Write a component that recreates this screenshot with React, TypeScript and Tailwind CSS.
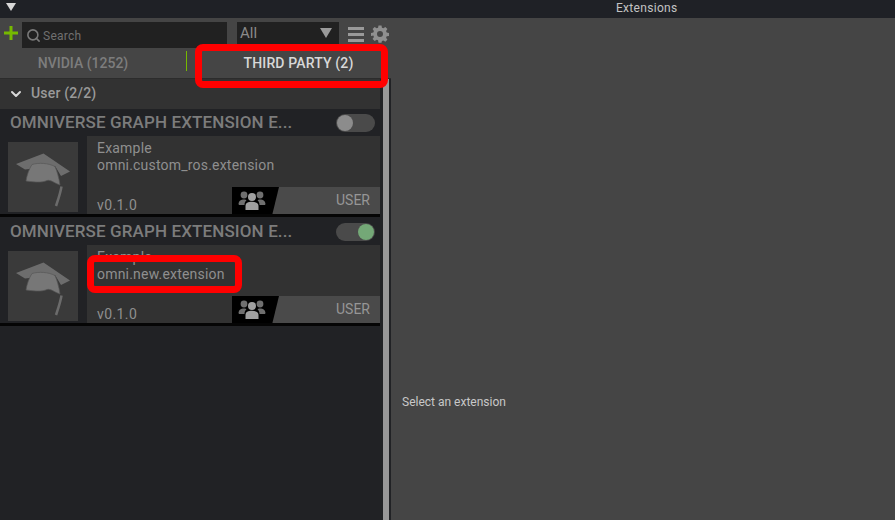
import { ChevronDown, Search } from "lucide-react";

function CapIcon() {
  return (
    <svg viewBox="0 0 70 70" className="w-[70px] h-[70px]">
      <path d="M35.500 11.500L8 22L17 27.500L47 24L53 34L62 29.500Z" fill="#6d6d6d" />
      <path d="M24 22.500C31 20.500 40 21 47 24.500C49 29 51 36 52 43C46 41 43 37.500 39 38.500C33 41 27 40 18 39C19 33 21 27 24 22.500Z" fill="#777777" stroke="#565656" strokeWidth="0.7" />
      <path d="M53.500 44.500C52.500 51 50 58 48 64" stroke="#6b6b6b" strokeWidth="2.500" fill="none" />
    </svg>
  );
}

function UsersIcon() {
  return (
    <svg viewBox="0 0 28 22" className="w-[28px] h-[22px]" fill="#8e8e8e">
      <circle cx="6" cy="6" r="3.400" fill="#6f6f6f" />
      <circle cx="22" cy="6" r="3.400" fill="#6f6f6f" />
      <path d="M0.500 15C1 11.500 3 10.500 6 10.500C7.500 10.500 8 11 8.500 11.500C7 12.500 6.500 14 6.500 16L1 16Z" fill="#6f6f6f" />
      <path d="M27.500 15C27 11.500 25 10.500 22 10.500C20.500 10.500 20 11 19.500 11.500C21 12.500 21.500 14 21.500 16L27 16Z" fill="#6f6f6f" />
      <circle cx="14" cy="8" r="4" fill="#a0a0a0" />
      <path d="M7.500 21V17C7.500 14 10 12.800 14 12.800C18 12.800 20.500 14 20.500 17V21Z" fill="#a0a0a0" />
    </svg>
  );
}

function ExtensionCard({ subtitle, enabled }: { subtitle: string; enabled: boolean }) {
  return (
    <div className="border-b-[3px] border-[#050505] w-[380px]">
      <div className="h-[27px] pl-[10px] pr-[5px] flex items-center justify-between bg-[#212225]">
        <span className="text-[17px] font-medium tracking-[0.12px] text-[#7c7c7c] whitespace-nowrap">
          OMNIVERSE GRAPH EXTENSION E...
        </span>
        <span className={`w-[39px] h-[18px] rounded-full bg-[#4a4a4a] flex items-center px-[1px] ${enabled ? "justify-end" : "justify-start"}`}>
          <span className={`w-[16px] h-[16px] rounded-full ${enabled ? "bg-[#74a877]" : "bg-[#8c8c8c]"}`} />
        </span>
      </div>
      <div className="h-[78px] flex bg-[#212225]">
        <div className="w-[87px] pl-[8px] pt-[6px]">
          <div className="bg-[#3a3a3a] w-[70px] h-[70px]">
            <CapIcon />
          </div>
        </div>
        <div className="flex-1 bg-[#323232] relative">
          <div className="pl-[10px] pt-[4px] text-[14px] font-normal tracking-[0.2px] leading-[17px] text-[#8f8f8f]">
            <div>Example</div>
            <div>{subtitle}</div>
          </div>
          <div className="absolute left-[10px] top-[59px] text-[14px] tracking-[0.4px] text-[#8f8f8f]">v0.1.0</div>
          <div className="absolute right-0 bottom-0 w-[148px] h-[27px] flex bg-[#4a4a4a] items-center justify-end pr-[10px] text-[14px] text-[#969696]">
            <div className="absolute left-0 top-0 w-[47px] h-[27px] bg-black [clip-path:polygon(0_0,100%_0,86%_100%,0_100%)] pl-[6px] pt-[2px]">
              <UsersIcon />
            </div>
            USER
          </div>
        </div>
      </div>
    </div>
  );
}

export default function App() {
  return (
    <div className="w-[895px] h-[520px] overflow-hidden relative bg-[#454545] flex flex-col font-['Roboto',sans-serif]">
      {/* Title bar */}
      <div className="h-[18px] bg-[#1f2126] relative flex items-start shrink-0">
        <span className="ml-[6px] mt-[3px] w-0 h-0 border-l-[5px] border-r-[5px] border-t-[8px] border-l-transparent border-r-transparent border-t-[#d8d8d8]" />
        <span className="absolute left-[616px] top-0 text-[12px] leading-[17px] tracking-[0.3px] text-[#c4c4c4]">Extensions</span>
      </div>

      <div className="flex flex-1 min-h-0">
        <div className="w-[391px] flex flex-col shrink-0">
          {/* Toolbar */}
          <div className="h-[30px] flex items-start pt-[4px] shrink-0">
            <svg viewBox="0 0 14 14" className="w-[14px] h-[14px] ml-[4px] mt-[4px] mr-[4px]" fill="#76b900">
              <path d="M5.500 0H8.500V5.500H14V8.500H8.500V14H5.500V8.500H0V5.500H5.500Z" />
            </svg>
            <div className="w-[205px] h-[26px] bg-[#212121] flex items-center pl-[4px] gap-[2px] pt-[1px]">
              <Search className="w-[15px] h-[15px] text-[#7a7a7a]" strokeWidth={2.500} />
              <span className="text-[12px] text-[#707070] tracking-[0.25px]">Search</span>
            </div>
            <div className="w-[102px] h-[22px] ml-[10px] bg-[#212121] flex items-center justify-between pl-[3px] pr-[7px]">
              <span className="text-[15px] text-[#8a8a8a] pt-[1px]">All</span>
              <span className="w-0 h-0 border-l-[6px] border-r-[6px] border-t-[10px] border-l-transparent border-r-transparent border-t-[#9a9a9a]" />
            </div>
            <div className="ml-[9px] mt-[5px] w-[16px] flex flex-col gap-[3px]">
              <span className="h-[3px] bg-[#9a9a9a]" />
              <span className="h-[3px] bg-[#9a9a9a]" />
              <span className="h-[3px] bg-[#9a9a9a]" />
            </div>
            <svg viewBox="0 0 24 24" className="w-[18px] h-[18px] ml-[7px] mt-[3px]" fill="#8f8f8f">
              <path fillRule="evenodd" d="M10 1h4l.6 3.100 1.900.8 2.600-1.800 2.800 2.800-1.800 2.600.8 1.900L24 11v4l-3.100.6-.8 1.900 1.800 2.600-2.800 2.800-2.600-1.800-1.900.8L14 24h-4l-.6-3.100-1.900-.8-2.600 1.800-2.800-2.800 1.800-2.600-.8-1.900L0 15v-4l3.100-.6.8-1.900-1.800-2.600 2.800-2.800 2.600 1.800 1.900-.8ZM12 8.500a4 4 0 1 0 0 8 4 4 0 0 0 0-8Z" transform="translate(0 -0.500)" />
            </svg>
          </div>

          {/* Tabs */}
          <div className="h-[31px] flex shrink-0 w-[391px] border-b border-[#2c2c2c]">
            <div className="w-[186px] flex items-center justify-center pr-[20px] text-[14px] font-medium text-[#7d7d7d]">NVIDIA (1252)</div>
            <div className="w-px h-[20px] mt-[3px] bg-[#76b900]" />
            <div className="w-[196px] flex items-center justify-center pl-[27px] text-[14px] font-medium tracking-[0.15px] text-[#d8d8d8]">THIRD PARTY (2)</div>
          </div>

          {/* List */}
          <div className="flex-1 flex min-h-0">
            <div className="w-[383px] bg-[#212225] shrink-0">
              <div className="h-[30px] bg-[#323232] flex items-center pl-[8px] gap-[7px] pb-[1px] w-[380px]">
                <ChevronDown className="w-[16px] h-[16px] text-[#d8d8d8]" strokeWidth={3} />
                <span className="text-[14px] font-medium tracking-[0.2px] text-[#9a9a9a]">User (2/2)</span>
              </div>
              <ExtensionCard subtitle="omni.custom_ros.extension" enabled={false} />
              <div className="h-[1px]" />
              <ExtensionCard subtitle="omni.new.extension" enabled />
            </div>
            <div className="w-[6px] bg-[#989898]" />
            <div className="w-[2px] bg-[#212225]" />
          </div>
        </div>

        {/* Detail pane */}
        <div className="flex-1 pl-[11px] pt-[376px]">
          <span className="block text-[12px] leading-[16px] text-[#c8c8c8]">Select an extension</span>
        </div>
      </div>

      {/* Red annotations */}
      <div className="absolute left-[195px] top-[44px] w-[193px] h-[44px] border-[7px] border-[#ff0000] rounded-[8px]" />
      <div className="absolute left-[87px] top-[255px] w-[155px] h-[38px] border-[7px] border-[#ff0000] rounded-[8px]" />
    </div>
  );
}
